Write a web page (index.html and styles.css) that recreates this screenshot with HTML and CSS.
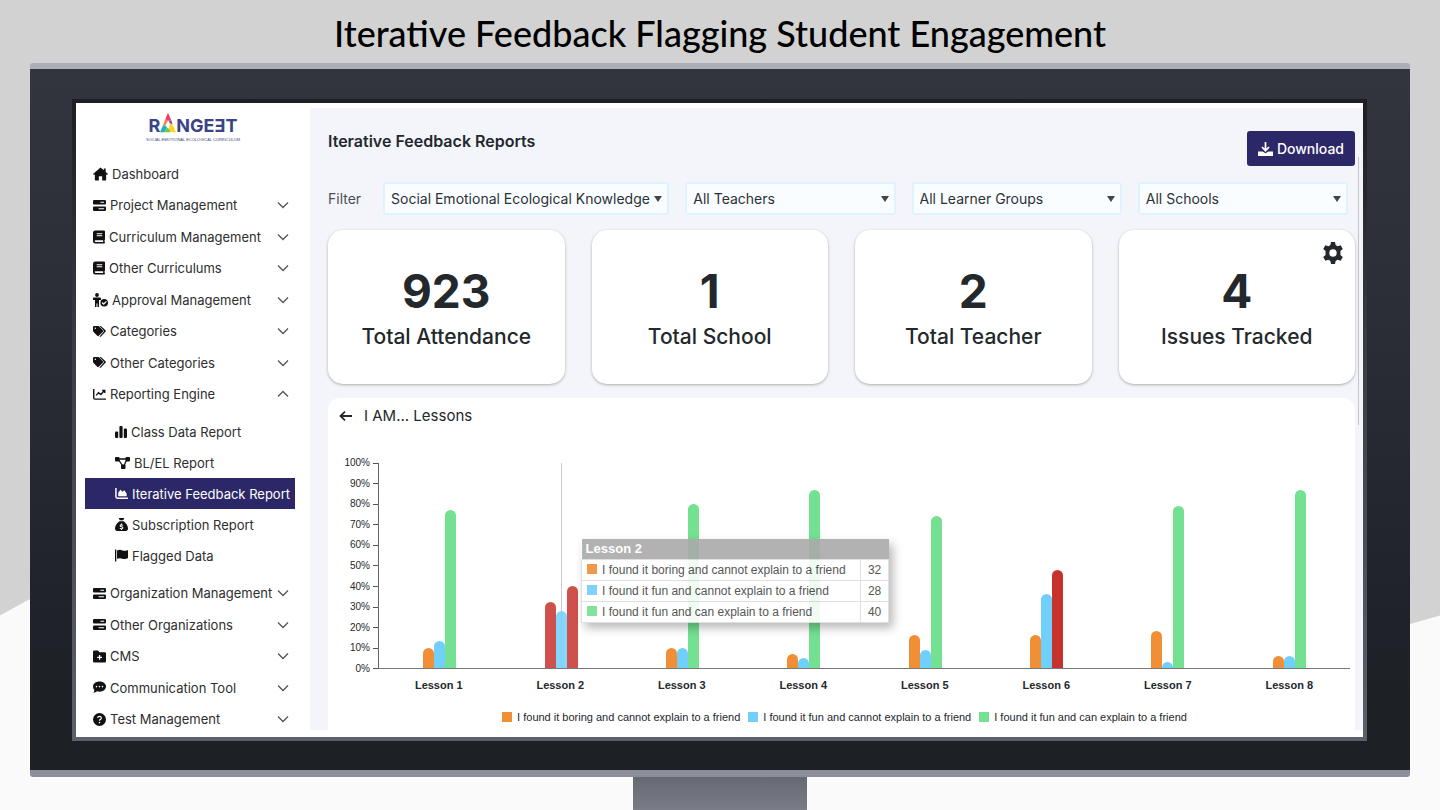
FILE: index.html
```html
<!DOCTYPE html>
<html lang="en">
<head>
<meta charset="utf-8">
<meta name="viewport" content="width=device-width, initial-scale=1">
<title>Iterative Feedback Flagging Student Engagement</title>
<link rel="stylesheet" href="styles.css">
</head>
<body>
<svg class="sprite" aria-hidden="true">
  <symbol id="i-home" viewBox="0 0 16 14"><path d="M8 0 0 7l1 1.100L2 7.300V13.200a.8.8 0 0 0 .8.8H6.200V9.500h3.600V14h3.400a.8.8 0 0 0 .8-.8V7.300l1 .8L16 7l-2.500-2.200V1h-2v2z"/></symbol>
  <symbol id="i-server" viewBox="0 0 14 12"><path fill-rule="evenodd" d="M1.200 0h11.600Q14 0 14 1.200v2.600Q14 5 12.800 5H1.200Q0 5 0 3.800V1.200Q0 0 1.200 0zM8 2v1h4V2zM1.200 7h11.600Q14 7 14 8.200v2.600q0 1.200-1.200 1.200H1.200Q0 12 0 10.800V8.200Q0 7 1.200 7zM6 9v1h6V9z"/></symbol>
  <symbol id="i-book" viewBox="0 0 13 14"><path fill-rule="evenodd" d="M2.500 0H12q1 0 1 1v8.500q0 .6-.5.900v1.800q.5.200.5.800 0 1-1 1H2.500Q0 14 0 11.500v-9Q0 0 2.500 0zM4 3v1h6V3zm0 2.200v1h6v-1zM2.700 10.500a.9.9 0 0 0 0 1.800H11v-1.800z"/></symbol>
  <symbol id="i-approve" viewBox="0 0 15 14"><circle cx="4" cy="2" r="1.900"/><path d="M0 5.200Q0 4.500 1 4.500h6q1 0 1 1V7H6v7H4.500v-3.500h-1V14H2V7H0z"/><path fill-rule="evenodd" d="M11.200 6a3.800 3.800 0 1 1 0 7.600 3.800 3.800 0 0 1 0-7.600zm1.800 2-2.300 2.300-1.200-1.200-.8.8 2 2 3.100-3.100z"/></symbol>
  <symbol id="i-tags" viewBox="0 0 14 12"><path fill-rule="evenodd" d="M0 1.200Q0 0 1.200 0h4.200q.6 0 1 .4l4.200 4.300q.8.800 0 1.600l-4.400 4.400q-.8.800-1.600 0L.4 6.300Q0 5.900 0 5.300zM2.500 1.600a.8.8 0 1 0 0 1.600.8.8 0 0 0 0-1.600z"/><path d="M7 0h1.500l4.900 4.700q.9.900 0 1.700L8.600 11.300q-.8.700-1.600 0l4.200-4.800q.9-1 0-1.900z"/></symbol>
  <symbol id="i-line" viewBox="0 0 14 12"><path d="M.8 0v9.500q0 1.500 1.500 1.500H14M3.500 7 6 4l2.500 2 4-4.500M9.800 1.500h2.900v3" fill="none" stroke="currentColor" stroke-width="1.500"/></symbol>
  <symbol id="i-bars" viewBox="0 0 12 12"><rect y="5.500" width="3.200" height="6.500" rx="1"/><rect x="4.400" width="3.200" height="12" rx="1"/><rect x="8.800" y="2.500" width="3.200" height="9.500" rx="1"/></symbol>
  <symbol id="i-nodes" viewBox="0 0 15 12"><path d="M2 2h11M3 2l5.500 8L12 2" fill="none" stroke="currentColor" stroke-width="1.300"/><rect width="4.500" height="4.500" rx="1"/><rect x="10.500" width="4.500" height="4.500" rx="1"/><rect x="6" y="7.500" width="4.500" height="4.500" rx="1"/></symbol>
  <symbol id="i-area" viewBox="0 0 14 12"><path d="M1 0v9.500q0 1.500 1.500 1.500H14" fill="none" stroke="currentColor" stroke-width="1.600"/><path d="M3.500 9V5L6 2l2 2 2-1.500L12.500 6v3z"/></symbol>
  <symbol id="i-bag" viewBox="0 0 14 14"><path fill-rule="evenodd" d="M4 0h6L8.900 2.500H5.100zM4.800 3.500h4.400C12 5.500 14 8.500 14 11q0 3-2.500 3h-9Q0 14 0 11c0-2.500 2-5.500 4.800-7.500zM6.500 6v.8q-1.500.4-1.500 1.700 0 1.100 2 1.500 1 .2 1 .7 0 .6-1.500.4l-1.200-.4-.3 1 1.500.4V13h1v-.9q1.600-.3 1.600-1.600Q9.100 9.300 7 8.900 6 8.700 6 8.300q0-.6 2.300 0l.4-1-1.200-.4V6z"/></symbol>
  <symbol id="i-flag" viewBox="0 0 14 13"><path d="M0 0h1.400v13H0zM2.200 1.200Q5-.3 8 1q3 1 6-.5v8.800q-3 1.700-6 .6-3-1.200-5.800.2z"/></symbol>
  <symbol id="i-folder" viewBox="0 0 13 12"><path fill-rule="evenodd" d="M1.200 0H5l1.500 1.800h5.300Q13 1.800 13 3v7.800q0 1.200-1.200 1.200H1.200Q0 12 0 10.800V1.200Q0 0 1.200 0zM6 4.500V6.200H4.200v1.200H6v1.800h1.200V7.400H9V6.200H7.200V4.500z"/></symbol>
  <symbol id="i-chat" viewBox="0 0 13 12"><path fill-rule="evenodd" d="M6.500 0C10.200 0 13 2.200 13 5s-2.800 5.200-6.500 5.200q-1.200 0-2.300-.4Q2.500 11.200.3 11.200 1.300 10 1.400 8.500 0 7 0 5c0-2.800 2.800-5 6.500-5zM3.500 4.300a.8.8 0 1 0 0 1.600.8.8 0 0 0 0-1.600zm3 0a.8.8 0 1 0 0 1.600.8.8 0 0 0 0-1.600zm3 0a.8.8 0 1 0 0 1.600.8.8 0 0 0 0-1.600z"/></symbol>
  <symbol id="i-help" viewBox="0 0 13 13"><circle cx="6.500" cy="6.500" r="6.500"/><path d="M4.600 5q.2-1.600 1.900-1.600T8.400 5q0 .9-1 1.400t-.9 1.400" fill="none" stroke="#fff" stroke-width="1.200"/><circle cx="6.500" cy="9.600" r=".8" fill="#fff"/></symbol>
  <symbol id="i-down" viewBox="0 0 12 8"><path d="m1 1.500 5 5 5-5" fill="none" stroke="currentColor" stroke-width="1.300"/></symbol>
  <symbol id="i-up" viewBox="0 0 12 8"><path d="m1 6.500 5-5 5 5" fill="none" stroke="currentColor" stroke-width="1.300"/></symbol>
  <symbol id="i-download" viewBox="0 0 15 14"><path d="M7.500 0v8M4 5l3.500 3.700L11 5" fill="none" stroke="currentColor" stroke-width="1.700"/><path d="M0 9.500h4.500l3 1.800 3-1.800H15V14H0z"/></symbol>
  <symbol id="i-gear" viewBox="0 0 20 22"><path fill-rule="evenodd" d="M8 0h4l.6 3 2 1.200 3-1L19.800 7l-2.400 2q.2 2 0 4l2.400 2-2.200 3.800-3-1L12.600 19 12 22H8l-.6-3-2-1.200-3 1L.2 15l2.400-2q-.2-2 0-4L.2 7l2.200-3.800 3 1L7.400 3zM10 7.300a3.700 3.700 0 1 0 0 7.400 3.700 3.700 0 0 0 0-7.400z"/></symbol>
  <symbol id="i-back" viewBox="0 0 13 10"><path d="M13 5H1.500M6 .7 1.500 5 6 9.300" fill="none" stroke="currentColor" stroke-width="1.800"/></symbol>
</svg>

<h1 class="slide-title">Iterative Feedback Flagging Student Engagement</h1>

<div class="monitor">
  <div class="bezel">
    <div class="screen">
      <aside class="sidebar">
        <a class="logo" href="#" aria-label="Rangeet">
          <span class="logo-word">R<svg class="logo-a" viewBox="0 0 18 22" aria-hidden="true"><path fill="#ee3f6b" d="M9 0 13 9H8L6 7z"/><path fill="#f58345" d="m6 7 3 2-3 5-3 1z"/><path fill="#8a4ba0" d="m10 9 3 0 1 4-3-1z"/><path fill="#22b5b5" d="m3 15 3-1 2 3-3 5H0z"/><path fill="#f9d62b" d="m11 12 3 1 4 9h-6l-2-4z"/><path fill="#7cc443" d="m8 17 2 1 2 4H5z"/></svg>NGEƎT</span>
          <span class="logo-tag">SOCIAL EMOTIONAL ECOLOGICAL CURRICULUM</span>
        </a>
        <nav class="nav" aria-label="Main">
          <a class="item" href="#"><svg class="ico wide"><use href="#i-home"/></svg>Dashboard</a>
          <a class="item" href="#"><svg class="ico"><use href="#i-server"/></svg>Project Management<svg class="chev"><use href="#i-down"/></svg></a>
          <a class="item" href="#"><svg class="ico slim"><use href="#i-book"/></svg>Curriculum Management<svg class="chev"><use href="#i-down"/></svg></a>
          <a class="item" href="#"><svg class="ico slim"><use href="#i-book"/></svg>Other Curriculums<svg class="chev"><use href="#i-down"/></svg></a>
          <a class="item" href="#"><svg class="ico wide"><use href="#i-approve"/></svg>Approval Management<svg class="chev"><use href="#i-down"/></svg></a>
          <a class="item" href="#"><svg class="ico"><use href="#i-tags"/></svg>Categories<svg class="chev"><use href="#i-down"/></svg></a>
          <a class="item" href="#"><svg class="ico"><use href="#i-tags"/></svg>Other Categories<svg class="chev"><use href="#i-down"/></svg></a>
          <a class="item" href="#" aria-expanded="true"><svg class="ico"><use href="#i-line"/></svg>Reporting Engine<svg class="chev"><use href="#i-up"/></svg></a>
          <div class="subnav">
            <a class="item" href="#"><svg class="ico slim"><use href="#i-bars"/></svg>Class Data Report</a>
            <a class="item" href="#"><svg class="ico wide"><use href="#i-nodes"/></svg>BL/EL Report</a>
            <a class="item active" href="#" aria-current="page"><svg class="ico"><use href="#i-area"/></svg>Iterative Feedback Report</a>
            <a class="item" href="#"><svg class="ico"><use href="#i-bag"/></svg>Subscription Report</a>
            <a class="item" href="#"><svg class="ico"><use href="#i-flag"/></svg>Flagged Data</a>
          </div>
          <a class="item" href="#"><svg class="ico"><use href="#i-server"/></svg>Organization Management<svg class="chev"><use href="#i-down"/></svg></a>
          <a class="item" href="#"><svg class="ico"><use href="#i-server"/></svg>Other Organizations<svg class="chev"><use href="#i-down"/></svg></a>
          <a class="item" href="#"><svg class="ico"><use href="#i-folder"/></svg>CMS<svg class="chev"><use href="#i-down"/></svg></a>
          <a class="item" href="#"><svg class="ico"><use href="#i-chat"/></svg>Communication Tool<svg class="chev"><use href="#i-down"/></svg></a>
          <a class="item" href="#"><svg class="ico"><use href="#i-help"/></svg>Test Management<svg class="chev"><use href="#i-down"/></svg></a>
        </nav>
      </aside>

      <main class="main">
        <header class="head">
          <h2 class="page-title">Iterative Feedback Reports</h2>
          <button class="download" type="button"><svg class="dl-ico" aria-hidden="true"><use href="#i-download"/></svg>Download</button>
        </header>

        <form class="filters">
          <span class="filter-label">Filter</span>
          <div class="select wide-select"><select aria-label="Curriculum"><option>Social Emotional Ecological Knowledge</option></select></div>
          <div class="select"><select aria-label="Teachers"><option>All Teachers</option></select></div>
          <div class="select"><select aria-label="Learner groups"><option>All Learner Groups</option></select></div>
          <div class="select"><select aria-label="Schools"><option>All Schools</option></select></div>
        </form>

        <section class="cards" aria-label="Totals">
          <article class="card"><strong class="num">923</strong><span class="cap">Total Attendance</span></article>
          <article class="card"><strong class="num">1</strong><span class="cap">Total School</span></article>
          <article class="card"><strong class="num">2</strong><span class="cap">Total Teacher</span></article>
          <article class="card"><button class="gear" type="button" aria-label="Settings"><svg><use href="#i-gear"/></svg></button><strong class="num">4</strong><span class="cap">Issues Tracked</span></article>
        </section>

        <section class="panel">
          <header class="panel-head"><button class="back" type="button" aria-label="Back"><svg><use href="#i-back"/></svg></button><h3 class="panel-title">I AM... Lessons</h3></header>
          <div class="chart">
            <ol class="ticks">
              <li>100%</li><li>90%</li><li>80%</li><li>70%</li><li>60%</li><li>50%</li><li>40%</li><li>30%</li><li>20%</li><li>10%</li><li>0%</li>
            </ol>
            <div class="plot">
              <div class="group"><i class="bar o" style="height:10%"></i><i class="bar b" style="height:13%"></i><i class="bar g" style="height:77%"></i></div>
              <div class="group hover"><i class="bar r" style="height:32%"></i><i class="bar b" style="height:28%"></i><i class="bar r" style="height:40%"></i>
                <table class="tip">
                  <thead><tr><th colspan="2">Lesson 2</th></tr></thead>
                  <tbody>
                    <tr><td><i class="key o"></i>I found it boring and cannot explain to a friend</td><td>32</td></tr>
                    <tr><td><i class="key b"></i>I found it fun and cannot explain to a friend</td><td>28</td></tr>
                    <tr><td><i class="key g"></i>I found it fun and can explain to a friend</td><td>40</td></tr>
                  </tbody>
                </table>
              </div>
              <div class="group"><i class="bar o" style="height:10%"></i><i class="bar b" style="height:10%"></i><i class="bar g" style="height:80%"></i></div>
              <div class="group"><i class="bar o" style="height:7%"></i><i class="bar b" style="height:5%"></i><i class="bar g" style="height:87%"></i></div>
              <div class="group"><i class="bar o" style="height:16%"></i><i class="bar b" style="height:9%"></i><i class="bar g" style="height:74%"></i></div>
              <div class="group"><i class="bar o" style="height:16%"></i><i class="bar b" style="height:36%"></i><i class="bar r" style="height:48%"></i></div>
              <div class="group"><i class="bar o" style="height:18%"></i><i class="bar b" style="height:3%"></i><i class="bar g" style="height:79%"></i></div>
              <div class="group"><i class="bar o" style="height:6%"></i><i class="bar b" style="height:6%"></i><i class="bar g" style="height:87%"></i></div>
            </div>
            <ol class="names">
              <li>Lesson 1</li><li>Lesson 2</li><li>Lesson 3</li><li>Lesson 4</li><li>Lesson 5</li><li>Lesson 6</li><li>Lesson 7</li><li>Lesson 8</li>
            </ol>
          </div>
          <ul class="legend">
            <li><i class="key o"></i>I found it boring and cannot explain to a friend</li>
            <li><i class="key b"></i>I found it fun and cannot explain to a friend</li>
            <li><i class="key g"></i>I found it fun and can explain to a friend</li>
          </ul>
        </section>
        <div class="scroll" aria-hidden="true"></div>
      </main>
    </div>
  </div>
</div>
<div class="stand"></div>
</body>
</html>
```
FILE: styles.css
```css
* { box-sizing: border-box; }

body {
  margin: 0;
  min-height: 100vh;
  display: flex;
  flex-direction: column;
  background: #fafafa;
  color: #23282c;
  font-family: Inter, "Liberation Sans", sans-serif;
  font-size: 14px;
}

/* grey backdrop with a slanted lower edge */
body::before {
  content: "";
  position: absolute;
  inset: 0;
  z-index: -1;
  background: #d2d2d2;
  clip-path: polygon(0 0, 100% 0, 100% 76%, 98% 77%, 50% 95%, 2% 74%, 0 76%);
}

.sprite { position: absolute; width: 0; height: 0; }
svg { fill: currentColor; flex: none; }
h1, h2, h3, ol, ul { margin: 0; padding: 0; }
ol, ul { list-style: none; }
a { color: inherit; text-decoration: none; }
button { font: inherit; border: 0; padding: 0; background: none; color: inherit; cursor: pointer; }

.slide-title {
  padding: 11px 16px 8px;
  color: #000;
  font: 500 36px/44px Lato, sans-serif;
  text-align: center;
}

.monitor {
  flex: 1;
  display: flex;
  margin: 0 30px;
  padding: 30px 43px 29px 42px;
  border-top: 6px solid #acafba;
  border-bottom: 7px solid #8c8e9a;
  border-radius: 3px;
  background: linear-gradient(#32353d, #2b2e36 35%, #20232b 75%, #1d2024 90%) padding-box;
}

.bezel {
  flex: 1;
  display: flex;
  min-width: 0;
  padding: 4px;
  background: linear-gradient(#1c1e22, #3a3d44 40%, #5c606a);
}

.screen {
  flex: 1;
  display: grid;
  grid-template-columns: 234px minmax(0, 1fr);
  padding: 5px 0 7px;
  background: #fff;
}

/* sidebar */
.sidebar { display: flex; flex-direction: column; padding-top: 4px; color: #2e2e2e; font-size: 13px; }

.logo { display: flex; flex-direction: column; align-items: center; height: 46px; color: #3b4387; }
.logo-word { display: flex; align-items: flex-end; font-size: 18px; font-weight: 700; line-height: 22px; }
.logo-a { width: 16px; height: 21px; margin-bottom: 4px; }
.logo-tag { font: 4px/6px "Liberation Sans", sans-serif; }

.nav { flex: 1; display: flex; flex-direction: column; justify-content: space-between; margin-bottom: -5px; }
.item { display: flex; align-items: center; gap: 4px; min-height: 31px; padding: 0 21px 0 17px; white-space: nowrap; }
.ico { width: 13px; height: 13px; color: #111; }
.ico.wide { width: 15px; height: 14px; }
.ico.slim { width: 12px; height: 14px; }
.chev { width: 12px; height: 8px; margin-left: auto; color: #555; }
.subnav { padding: 6px 15px 6px 9px; }
.subnav .item { padding: 0 0 0 30px; }
.subnav .active { background: #2c2868; color: #fff; }
.active .ico { color: #fff; }

/* main column */
.main { position: relative; display: flex; flex-direction: column; padding: 23px 8px 0 18px; background: #f4f5fa; }
.scroll { position: absolute; top: 49px; right: 4px; width: 1px; height: 268px; background: #c3c4c8; }

.head { display: flex; justify-content: space-between; align-items: flex-start; }
.page-title { font-size: 16px; font-weight: 600; line-height: 20px; }
.download {
  display: flex; align-items: center; gap: 4px;
  height: 35px; padding: 0 11px;
  border-radius: 3px; background: #2c2868; color: #fff;
  font-weight: 500;
}
.dl-ico { width: 15px; height: 14px; }

.filters { display: flex; gap: 16px; align-items: center; margin: 16px 7px 15px 0; }
.filter-label { width: 39px; color: #4b5056; }
.select { position: relative; flex: 210 1 0; min-width: 0; }
.wide-select { flex: 286 1 0; }
.select::after {
  content: "";
  position: absolute; right: 7px; top: 14px;
  border: 4px solid transparent; border-top: 6px solid #444; border-bottom: 0;
  pointer-events: none;
}
.select select {
  appearance: none;
  width: 100%; height: 33px; padding: 0 12px 0 6px;
  border: 2px solid #def3ff; border-radius: 3px;
  background: #fafdff; color: #2c3136;
  font: 400 14px Inter, sans-serif;
}

.cards { display: grid; grid-template-columns: repeat(4, minmax(0, 1fr)); gap: 27px; }
.card {
  position: relative;
  display: flex; flex-direction: column; align-items: center;
  height: 154px; padding-top: 33px;
  border-radius: 15px; background: #fff;
  box-shadow: 0 1px 3px rgba(0, 0, 0, .3);
}
.num { font-size: 46px; font-weight: 700; line-height: 56px; }
.cap { font-size: 21px; font-weight: 500; line-height: 36px; }
.gear { position: absolute; top: 12px; right: 12px; }
.gear svg { display: block; width: 20px; height: 22px; }

/* chart panel */
.panel { flex: 1; display: flex; flex-direction: column; margin-top: 14px; padding: 8px 5px 3px 11px; border-radius: 12px 12px 0 0; background: #fff; }
.panel-head { display: flex; align-items: center; gap: 12px; }
.back svg { display: block; width: 13px; height: 12px; }
.panel-title { font-size: 15px; font-weight: 400; line-height: 20px; }

.chart { flex: 1; display: grid; grid-template-columns: 39px minmax(0, 1fr); grid-template-rows: minmax(205px, 1fr) 38px; margin-top: 37px; font-family: "Liberation Sans", sans-serif; }
.ticks { display: flex; flex-direction: column; justify-content: space-between; margin: -5px 0; font-size: 10px; line-height: 10px; text-align: right; }
.ticks li { display: flex; align-items: center; justify-content: flex-end; gap: 3px; height: 10px; }
.ticks li::after { content: ""; width: 5px; height: 1px; background: #555; }
.plot { display: grid; grid-template-columns: repeat(8, minmax(0, 1fr)); border-left: 1px solid #666; border-bottom: 1px solid #777; }
.group { position: relative; display: flex; justify-content: center; align-items: flex-end; }
.bar { width: 11px; border-radius: 6px 6px 0 0; }
.o { background: #f08f35; }
.b { background: #70cffb; }
.g { background: #74e091; }
.r { background: #c5332c; }
.hover::before { content: ""; position: absolute; top: 0; bottom: 0; left: 50%; width: 1px; background: #ccc; }
.hover .bar { position: relative; opacity: .85; }
.names { grid-column: 2; display: grid; grid-template-columns: repeat(8, minmax(0, 1fr)); font-size: 11px; font-weight: 700; line-height: 32px; text-align: center; }

.tip {
  position: absolute; z-index: 2; left: calc(50% + 20px); top: 76px;
  width: 308px; border-collapse: collapse;
  background: #fff; color: #444; opacity: .9;
  box-shadow: 4px 5px 9px rgba(0, 0, 0, .3);
  font-size: 12px; line-height: 20px; white-space: nowrap;
}
.tip th { padding: 0 4px; background: #aaa; color: #fff; font-size: 13px; line-height: 20px; text-align: left; }
.tip td { padding: 0 5px; border: 1px solid #ddd; }
.tip td + td { width: 28px; border-left: 1px dotted #999; text-align: center; }
.key { display: inline-block; width: 10px; height: 10px; margin-right: 5px; }

.legend { display: flex; justify-content: center; gap: 8px; font: 11px/20px "Liberation Sans", sans-serif; white-space: nowrap; }
.legend .key { vertical-align: -1px; }

.stand { width: 174px; height: 33px; margin: 0 auto; background: linear-gradient(#666872, #7a7c87); }
```
